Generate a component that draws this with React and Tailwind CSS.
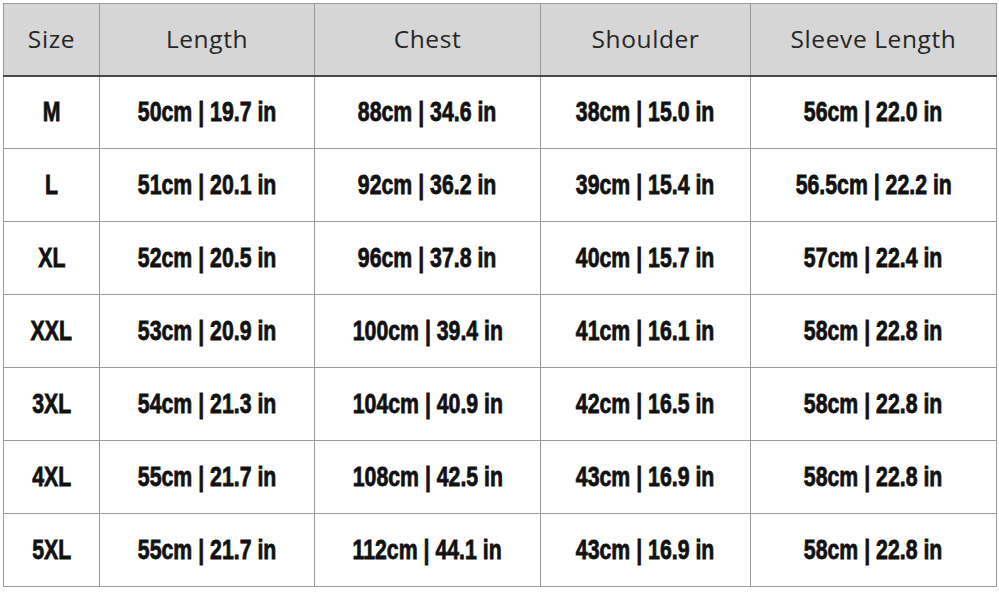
const HEADERS = ['Size', 'Length', 'Chest', 'Shoulder', 'Sleeve Length']

const ROWS = [
  ['M',   '50cm | 19.7 in', '88cm | 34.6 in',   '38cm | 15.0 in', '56cm | 22.0 in'],
  ['L',   '51cm | 20.1 in', '92cm | 36.2 in',   '39cm | 15.4 in', '56.5cm | 22.2 in'],
  ['XL',  '52cm | 20.5 in', '96cm | 37.8 in',   '40cm | 15.7 in', '57cm | 22.4 in'],
  ['XXL', '53cm | 20.9 in', '100cm | 39.4 in',  '41cm | 16.1 in', '58cm | 22.8 in'],
  ['3XL', '54cm | 21.3 in', '104cm | 40.9 in',  '42cm | 16.5 in', '58cm | 22.8 in'],
  ['4XL', '55cm | 21.7 in', '108cm | 42.5 in',  '43cm | 16.9 in', '58cm | 22.8 in'],
  ['5XL', '55cm | 21.7 in', '112cm | 44.1 in',  '43cm | 16.9 in', '58cm | 22.8 in'],
]

const WIDTHS = ['w-[96px]', 'w-[215px]', 'w-[226px]', 'w-[210px]', 'w-[246px]']

export default function App() {
  return (
    <div className="w-[999px] h-[592px] bg-white pt-[3px] pl-[3px]">
      <table className="border-collapse table-fixed border border-[#9a9a9a]">
        <thead>
          <tr className="h-[72px] bg-[#d6d6d6] border-b-2 border-[#4a4a4a]">
            {HEADERS.map((h, i) => (
              <th
                key={h}
                className={`${WIDTHS[i]} border-x border-[#9a9a9a] text-center font-normal text-[24.5px] text-[#262626] tracking-[0.6px] font-['Open_Sans','DejaVu_Sans',sans-serif]`}
              >
                {h}
              </th>
            ))}
          </tr>
        </thead>
        <tbody>
          {ROWS.map(row => (
            <tr key={row[0]} className="h-[73px]">
              {row.map((cell, i) => (
                <td
                  key={i}
                  className="border border-[#9a9a9a] text-center whitespace-nowrap"
                >
                  <span className="inline-block scale-x-[0.76] text-[#111] font-bold text-[28px] leading-none [-webkit-text-stroke:0.8px_#111] font-['Liberation_Sans',Arial,sans-serif]">
                    {cell}
                  </span>
                </td>
              ))}
            </tr>
          ))}
        </tbody>
      </table>
    </div>
  )
}
